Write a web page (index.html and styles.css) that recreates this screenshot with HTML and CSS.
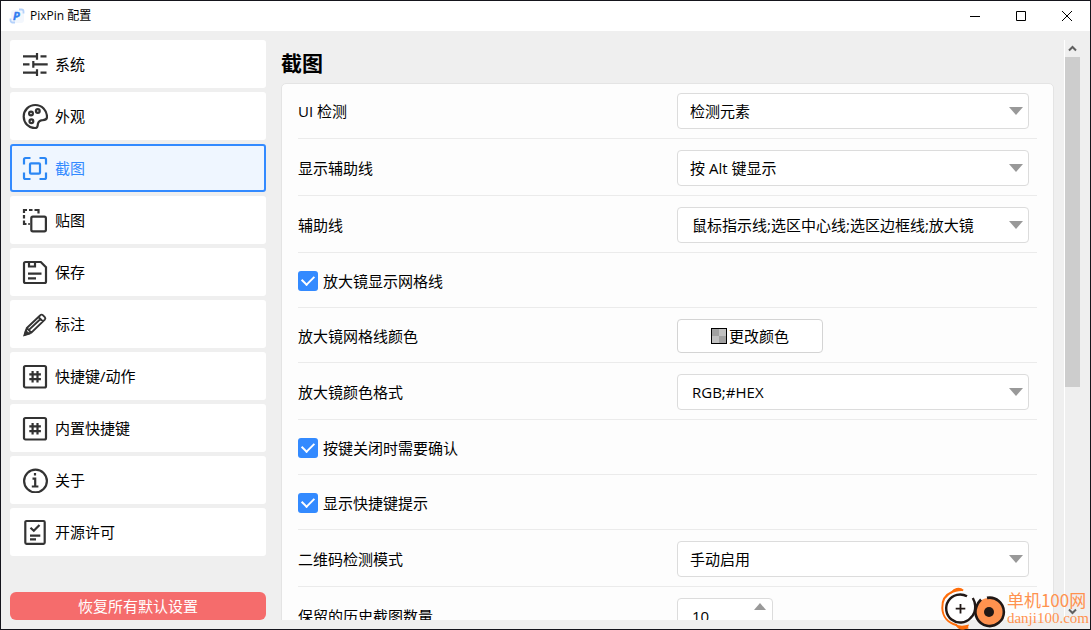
FILE: index.html
```html
<!DOCTYPE html>
<html lang="zh-CN">
<head>
<meta charset="utf-8">
<title>PixPin 配置</title>
<link rel="stylesheet" href="styles.css">
</head>
<body>
<div class="window">
  <header class="titlebar">
    <svg class="logo" viewBox="0 0 16 16" aria-hidden="true">
      <rect x="2" y="2" width="13" height="13" rx="3" fill="#f3f7fd"/>
      <path d="M10 1.500h2.500a2 2 0 0 1 2 2v2M6 14.500H3.500a2 2 0 0 1-2-2v-2" fill="none" stroke="#b5d2fb" stroke-width="1.800"/>
      <text x="4" y="12" class="logo-letter">P</text>
    </svg>
    <span class="title">PixPin 配置</span>
    <div class="window-buttons">
      <button type="button" aria-label="最小化"><svg viewBox="0 0 12 12"><path d="M1 6.500h10"/></svg></button>
      <button type="button" aria-label="最大化"><svg viewBox="0 0 12 12"><path d="M1.500 1.500h9v9h-9z"/></svg></button>
      <button type="button" aria-label="关闭"><svg viewBox="0 0 12 12"><path d="M1 1l10 10M11 1L1 11"/></svg></button>
    </div>
  </header>

  <div class="body">
    <aside class="sidebar">
      <nav class="nav">
        <button type="button" class="nav-item">
          <svg class="icon" viewBox="0 0 26 26"><path d="M1 5.300h14M15 2v6.700M18.500 5.300h6M1 13.300h6.500M11.300 10v6.700M11.300 13.300h14.400M1 21.700h14M15 18.300V25M18.500 21.700h6"/></svg>
          <span>系统</span>
        </button>
        <button type="button" class="nav-item">
          <svg class="icon" viewBox="0 0 26 26"><path d="M13.300 2C6.800 2 1.700 7.200 1.700 13.600c0 6.500 5 11.500 11.300 11.500 2 0 2.400-.8 2.600-2.300.3-3.500 1-5 3.600-5.400 3.400-.5 5.800-.4 5.800-3.400C25 7.200 19.800 2 13.300 2z"/><circle cx="9" cy="10.500" r="1.900"/><circle cx="15.800" cy="8" r="1.900"/><circle cx="9.400" cy="18.200" r="1.900"/></svg>
          <span>外观</span>
        </button>
        <button type="button" class="nav-item active" aria-current="page">
          <svg class="icon" viewBox="0 0 26 26"><path d="M2 9.500V4.500A1.500 1.500 0 0 1 3.500 3H8.500M17.500 3h5A1.500 1.500 0 0 1 24 4.500v5M24 17.500v5a1.500 1.500 0 0 1-1.500 1.500h-5M8.500 24h-5A1.500 1.500 0 0 1 2 22.500v-5"/><rect x="8" y="8.300" width="10" height="10.400" rx="1"/></svg>
          <span>截图</span>
        </button>
        <button type="button" class="nav-item">
          <svg class="icon" viewBox="0 0 26 26"><rect x="9.300" y="9.700" width="14.600" height="14.600" rx="1.500"/><path d="M2 6V3h3M7 3h3.500M12.500 3h4v3.500M2 8v3.500M2 13.500V17h2.500M6.300 17h1.500"/></svg>
          <span>贴图</span>
        </button>
        <button type="button" class="nav-item">
          <svg class="icon" viewBox="0 0 26 26"><path d="M3.500 3h15.300L24 8.300v14.200a1.500 1.500 0 0 1-1.500 1.500h-19A1.500 1.500 0 0 1 2 22.500v-18A1.500 1.500 0 0 1 3.500 3zM7 3v4.500h6V3M6 14.700h13.500M6 19.300h8"/></svg>
          <span>保存</span>
        </button>
        <button type="button" class="nav-item">
          <svg class="icon thin" viewBox="0 0 26 26"><path d="M3 23.500l1.800-6.500L18.300 4.200c.8-.8 1.700-.8 2.500 0l2 2c.7.700.7 1.600 0 2.400L9.300 21.600zM16.400 6l4.500 4.400M4.800 17l4.500 4.600M7.200 18.600L18.500 8"/><path d="M2.500 24l1.200-4 3 2.800z" fill="#333"/></svg>
          <span>标注</span>
        </button>
        <button type="button" class="nav-item">
          <svg class="icon" viewBox="0 0 26 26"><rect x="2" y="3" width="22" height="21.500" rx="1.500"/><path d="M10.600 8v11.500M15.500 8v11.500M7.300 11.300h11.600M7.300 16.200h11.600"/></svg>
          <span>快捷键/动作</span>
        </button>
        <button type="button" class="nav-item">
          <svg class="icon" viewBox="0 0 26 26"><rect x="2" y="3" width="22" height="21.500" rx="1.500"/><path d="M10.600 8v11.500M15.500 8v11.500M7.300 11.300h11.600M7.300 16.200h11.600"/></svg>
          <span>内置快捷键</span>
        </button>
        <button type="button" class="nav-item">
          <svg class="icon" viewBox="0 0 26 26"><circle cx="13.500" cy="14" r="11.400"/><path d="M13 6v2.600M10.500 11.700h2.700v8M9.800 19.500h6.600"/></svg>
          <span>关于</span>
        </button>
        <button type="button" class="nav-item">
          <svg class="icon" viewBox="0 0 26 26"><rect x="3.300" y="2" width="19.400" height="22.800" rx="1.200"/><path d="M8.500 8.700l3.300 3L17.500 6M8 16.700h10.300M8 20.300h6"/></svg>
          <span>开源许可</span>
        </button>
      </nav>
      <button type="button" class="reset">恢复所有默认设置</button>
    </aside>

    <main class="content">
      <h1>截图</h1>
      <form class="card">
        <div class="row">
          <label for="ui">UI 检测</label>
          <div class="control"><select id="ui"><option>检测元素</option></select></div>
        </div>
        <div class="row">
          <label for="guide-show">显示辅助线</label>
          <div class="control"><select id="guide-show"><option>按 Alt 键显示</option></select></div>
        </div>
        <div class="row">
          <label for="guides">辅助线</label>
          <div class="control"><select id="guides" class="multi"><option>鼠标指示线;选区中心线;选区边框线;放大镜</option></select></div>
        </div>
        <div class="row">
          <label class="check"><input type="checkbox" checked>放大镜显示网格线</label>
        </div>
        <div class="row">
          <label for="grid-color">放大镜网格线颜色</label>
          <div class="control"><button type="button" id="grid-color" class="color"><span class="swatch"></span>更改颜色</button></div>
        </div>
        <div class="row">
          <label for="format">放大镜颜色格式</label>
          <div class="control"><select id="format" class="multi"><option>RGB;#HEX</option></select></div>
        </div>
        <div class="row">
          <label class="check"><input type="checkbox" checked>按键关闭时需要确认</label>
        </div>
        <div class="row">
          <label class="check"><input type="checkbox" checked>显示快捷键提示</label>
        </div>
        <div class="row">
          <label for="qr">二维码检测模式</label>
          <div class="control"><select id="qr"><option>手动启用</option></select></div>
        </div>
        <div class="row">
          <label for="history">保留的历史截图数量</label>
          <div class="control">
            <div class="spin">
              <input id="history" type="text" inputmode="numeric" value="10">
              <div class="spin-buttons">
                <button type="button" class="up" aria-label="增加"></button>
                <button type="button" class="down" aria-label="减少"></button>
              </div>
            </div>
          </div>
        </div>
      </form>
    </main>

    <div class="scrollbar">
      <button type="button" aria-label="向上滚动"><svg viewBox="0 0 9 7"><path d="M1 5.500L4.500 2 8 5.500"/></svg></button>
      <div class="track"><div class="thumb"></div></div>
      <button type="button" aria-label="向下滚动"><svg viewBox="0 0 9 7"><path d="M1 1.500L4.500 5 8 1.500"/></svg></button>
    </div>
  </div>
</div>

<div class="watermark">
  <svg viewBox="0 0 66 44" aria-hidden="true">
    <path d="M23 4.500C19 1 14 3.500 12 6 5 9 2 15 2.300 22c.3 9 6 15 14 17 2 3 7 4 12 2.500" fill="none" stroke="#ff6d0a" stroke-width="2"/>
    <path d="M11 7.500C13 3 19 0 23.500 5 19 4.600 15 5.500 11 7.500zM15 38.500c5 1.500 9 1.500 14 0-1 5-8 6.500-11 3.500z" fill="#ff6d0a"/>
    <circle cx="20.500" cy="22.500" r="14" fill="#fff" fill-opacity=".8"/>
    <path d="M27 10.300A14 14 0 1 0 30.500 32C34 29 35.500 25 35.200 20 35 16.500 34 14 32.800 12" fill="none" stroke="#211816" stroke-width="2.400"/>
    <circle cx="49" cy="26" r="14" fill="#ff924f"/>
    <path d="M47 11.900a14.200 14.200 0 1 1-10.500 8.600c1-3 2.500-5 4.500-7" fill="none" stroke="#211816" stroke-width="2.600"/>
    <circle cx="49" cy="26" r="5" fill="#211816"/>
    <path d="M20.500 18v9.500M15.700 22.700h9.600" stroke="#211816" stroke-width="1.800"/>
  </svg>
  <div class="mark-text"><span class="mark-name">单机100网</span><span class="mark-site">danji100.com</span></div>
</div>
</body>
</html>
```

FILE: styles.css
```css
* { box-sizing: border-box; }

body {
  margin: 0;
  font: 15px/20px "Open Sans", "Noto Sans CJK SC", sans-serif;
  color: #000;
}

button, input, select { font: inherit; color: inherit; margin: 0; }

.window {
  display: flex;
  flex-direction: column;
  height: 100vh;
  border: 1px solid #15151c;
  background: #efefef;
  overflow: hidden;
}

.titlebar {
  display: flex;
  flex: none;
  align-items: center;
  height: 30px;
  padding-left: 8px;
  background: #fff;
}
.logo { width: 16px; height: 16px; }
.logo-letter { font: italic bold 11px "Open Sans", sans-serif; fill: #2f7cf0; stroke: #2f7cf0; stroke-width: 0.4; }
.title { margin-left: 5px; font-size: 12px; }
.window-buttons { display: flex; align-self: stretch; margin-left: auto; }
.window-buttons button {
  display: grid;
  place-items: center;
  width: 46px;
  padding: 0;
  border: 0;
  background: none;
}
.window-buttons svg { width: 12px; height: 12px; fill: none; stroke: #000; stroke-width: 1; }

.body { display: flex; flex: 1; min-height: 0; padding: 9px; }

.sidebar {
  display: flex;
  flex: none;
  flex-direction: column;
  justify-content: space-between;
  width: 256px;
}
.nav { display: flex; flex-direction: column; gap: 4px; }
.nav-item {
  display: flex;
  align-items: center;
  gap: 7px;
  height: 48px;
  padding: 0 10px;
  border: 2px solid #fff;
  border-radius: 3px;
  background: #fff;
  text-align: left;
}
.nav-item.active { border-color: #338aff; background: #eff6ff; color: #338aff; }
.icon {
  width: 26px;
  height: 26px;
  fill: none;
  stroke: #333;
  stroke-width: 2.2;
}
.icon.thin { stroke-width: 1.9; }
.active .icon { stroke: #2b87f5; }
.reset {
  height: 28px;
  padding: 0;
  border: 0;
  border-radius: 6px;
  background: #f56c6c;
  color: #fff;
}

.content { flex: 1; min-width: 0; margin: 0 10px 0 15px; overflow: hidden; }
h1 { margin: 0; padding: 9px 0 6px; font-size: 21px; line-height: 28px; font-weight: 700; }
.card {
  padding: 0 16px;
  border: 1px solid #e4e4e4;
  border-radius: 5px;
  background: #fdfdfd;
}
.row {
  display: grid;
  grid-template-columns: 379fr 360fr;
  align-items: center;
  min-height: 55px;
  padding: 11px 0 9px;
  border-bottom: 1px solid #ebebeb;
}
.row:first-child { padding-top: 9px; }
.check { display: flex; align-items: center; gap: 5px; }
.check input {
  appearance: none;
  display: grid;
  place-items: center;
  width: 20px;
  height: 20px;
  border-radius: 3px;
  background: #338aff;
}
.check input:checked::before {
  content: "";
  width: 10px;
  height: 6px;
  margin-bottom: 4px;
  border: solid #fff;
  border-width: 0 0 2px 2px;
  transform: rotate(-45deg);
}

.control { position: relative; padding-right: 8px; }
.control:has(select)::after {
  content: "";
  position: absolute;
  top: 14px;
  right: 14px;
  border: solid transparent;
  border-width: 8px 7px 0;
  border-top-color: #999;
  pointer-events: none;
}
select {
  appearance: none;
  display: block;
  width: 100%;
  height: 36px;
  padding: 0 32px 0 12px;
  border: 1px solid #dcdcdc;
  border-radius: 4px;
  background: #fff;
}
select.multi { padding-left: 14px; }
.color {
  display: flex;
  align-items: center;
  justify-content: center;
  gap: 2px;
  width: 146px;
  height: 34px;
  padding: 0;
  border: 1px solid #d4d4d4;
  border-radius: 4px;
  background: #fff;
}
.swatch {
  width: 16px;
  height: 16px;
  border: 1px solid #000;
  background: conic-gradient(#c0c0c0 25%, #a0a0a0 0 50%, #c0c0c0 0 75%, #a0a0a0 0);
}
.spin {
  display: flex;
  width: 96px;
  height: 36px;
  border: 1px solid #dcdcdc;
  border-radius: 4px;
  background: #fff;
}
.spin input { flex: 1; min-width: 0; padding: 0 0 0 14px; border: 0; background: none; outline: 0; }
.spin-buttons { display: flex; flex-direction: column; justify-content: space-between; padding: 4px 6px 4px 0; }
.spin-buttons button { width: 0; height: 0; padding: 0; border: solid transparent; background: none; }
.spin-buttons .up { border-width: 0 6px 7px; border-bottom-color: #999; }
.spin-buttons .down { border-width: 7px 6px 0; border-top-color: #999; }

.scrollbar {
  display: flex;
  flex: none;
  flex-direction: column;
  width: 17px;
  border-left: 1px solid #fff;
}
.scrollbar button {
  display: grid;
  place-items: center;
  width: 15px;
  height: 17px;
  padding: 0;
  border: 0;
  background: none;
}
.scrollbar svg { width: 9px; height: 7px; fill: none; stroke: #606060; stroke-width: 2; }
.scrollbar button:last-child svg { position: relative; z-index: 2; }
.track { flex: 1; }
.thumb { width: 15px; height: 60.5%; background: #cdcdcd; }

.watermark {
  position: absolute;
  z-index: 1;
  right: 2px;
  bottom: 0;
  display: flex;
  pointer-events: none;
}
.watermark svg { width: 66px; height: 44px; }
.mark-text { display: flex; flex-direction: column; padding: 4px 0 0 1px; color: #ff924f; white-space: nowrap; }
.mark-name { font: 17px/20px "Noto Sans CJK SC", sans-serif; }
.mark-site { font: 15px/16px "Liberation Serif", serif; }
```
